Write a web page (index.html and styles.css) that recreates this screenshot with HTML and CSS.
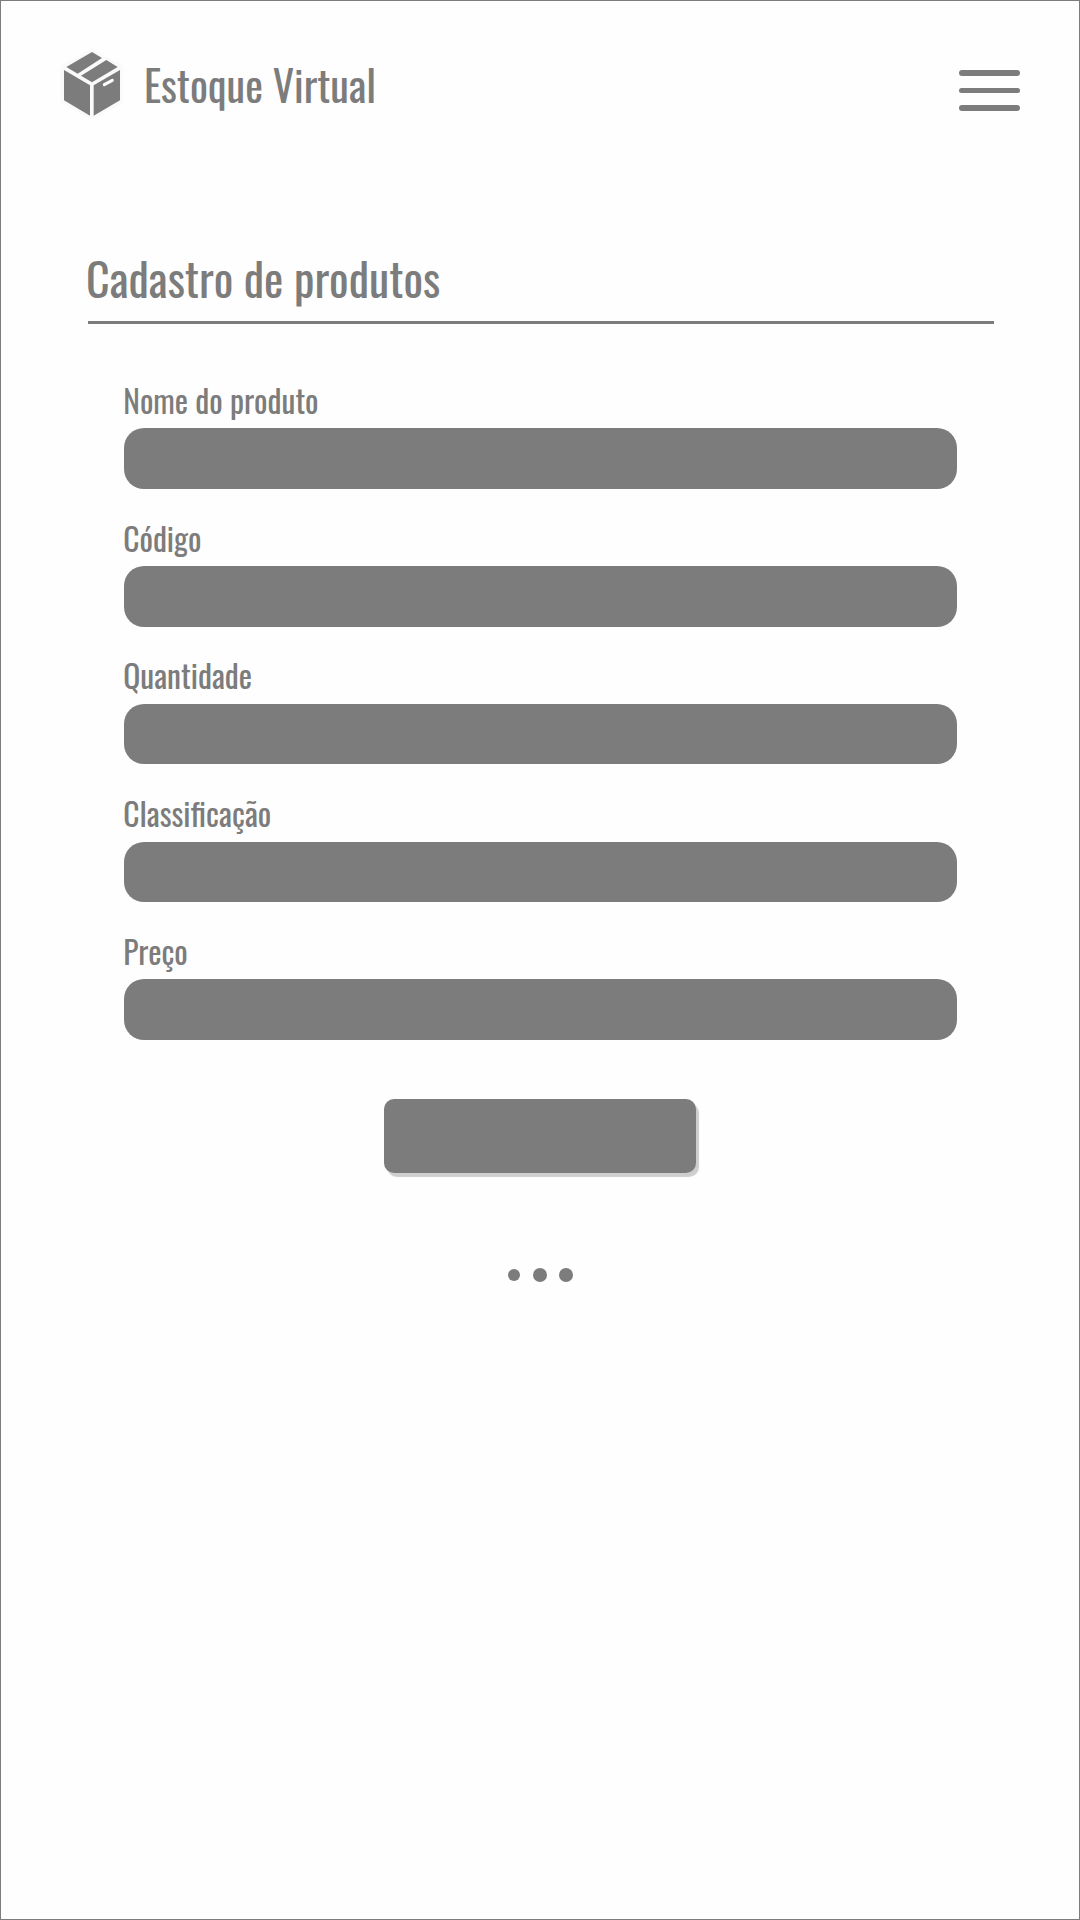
FILE: index.html
```html
<!DOCTYPE html>
<html lang="pt-BR">
<head>
<meta charset="utf-8">
<title>Estoque Virtual</title>
<link rel="stylesheet" href="styles.css">
</head>
<body>
<div class="page">
  <header class="header">
    <div class="brand">
      <svg class="logo" viewBox="60 50 192 220" aria-hidden="true">
        <path class="halo" d="M156 53 250 108V219L156 268 62 219V108Z"/>
        <path d="M156 65 186 83 113 130 79 110ZM199 89 233 110 156 156 123 136ZM72 119 150 165V256L72 210ZM240 119V210L161 256V165Z"/>
        <path class="handle" d="M193 163 217 150"/>
      </svg>
      <span class="brand-name">Estoque Virtual</span>
    </div>
    <div class="menu"><i></i><i></i><i></i></div>
  </header>
  <main class="content">
    <h1 class="title">Cadastro de produtos</h1>
    <form class="form">
      <label class="field"><span class="label">Nome do produto</span><span class="input"></span></label>
      <label class="field"><span class="label">Código</span><span class="input"></span></label>
      <label class="field"><span class="label">Quantidade</span><span class="input"></span></label>
      <label class="field"><span class="label">Classificação</span><span class="input"></span></label>
      <label class="field"><span class="label">Preço</span><span class="input"></span></label>
      <div class="submit"></div>
    </form>
    <div class="dots"><i class="small"></i><i></i><i></i></div>
  </main>
</div>
</body>
</html>
```
FILE: styles.css
```css
* { box-sizing: border-box; }
body { margin: 0; background: #fefefe; color: #7c7c7c; font-family: Oswald, Roboto, sans-serif; font-weight: 400; }
.page { width: 1080px; height: 1920px; border: 1px solid #7c7c7c; overflow: hidden; }
.header { display: flex; justify-content: space-between; align-items: flex-start; padding: 45.7px 59.5px 0 59px; height: 199px; }
.brand { display: flex; align-items: flex-start; }
.logo { width: 64px; height: 73.33px; fill: #7c7c7c; }
.logo .halo { fill: #fafafa; }
.logo .handle { fill: none; stroke: #fefefe; stroke-width: 9; stroke-linecap: round; }
.brand-name { margin: 7px 0 0 20px; font-size: 42.3px; line-height: 60px; white-space: nowrap; }
.menu { display: flex; flex-direction: column; gap: 12.1px; margin-top: 23.5px; }
.menu i { width: 60.5px; height: 5.4px; border-radius: 3px; background: #7c7c7c; }
.content { padding: 0 85px 0 87px; }
.title { margin: 0; height: 124px; padding-top: 47px; border-bottom: 3px solid #7c7c7c; font-size: 46px; line-height: 60px; font-weight: 400; text-indent: -2px; white-space: nowrap; }
.form { display: flex; flex-direction: column; padding: 55.8px 37.3px 0 35.6px; }
.field { display: block; height: 137.75px; }
.label { display: block; height: 48.5px; font-size: 31.6px; line-height: 40px; white-space: nowrap; text-indent: -.4px; }
.input { display: block; height: 60.7px; border-radius: 20px; background: #7c7c7c; }
.submit { align-self: center; width: 311.6px; height: 73.7px; margin-top: 30.3px; border-radius: 10px; background: #7c7c7c; box-shadow: 3px 4px 1px #cecece; }
.dots { display: flex; justify-content: center; align-items: center; gap: 12px; margin: 95.4px 2px 0 0; }
.dots i { width: 14px; height: 14px; border-radius: 50%; background: #7c7c7c; }
.dots .small { width: 12px; height: 12px; margin-right: 1px; }
```
